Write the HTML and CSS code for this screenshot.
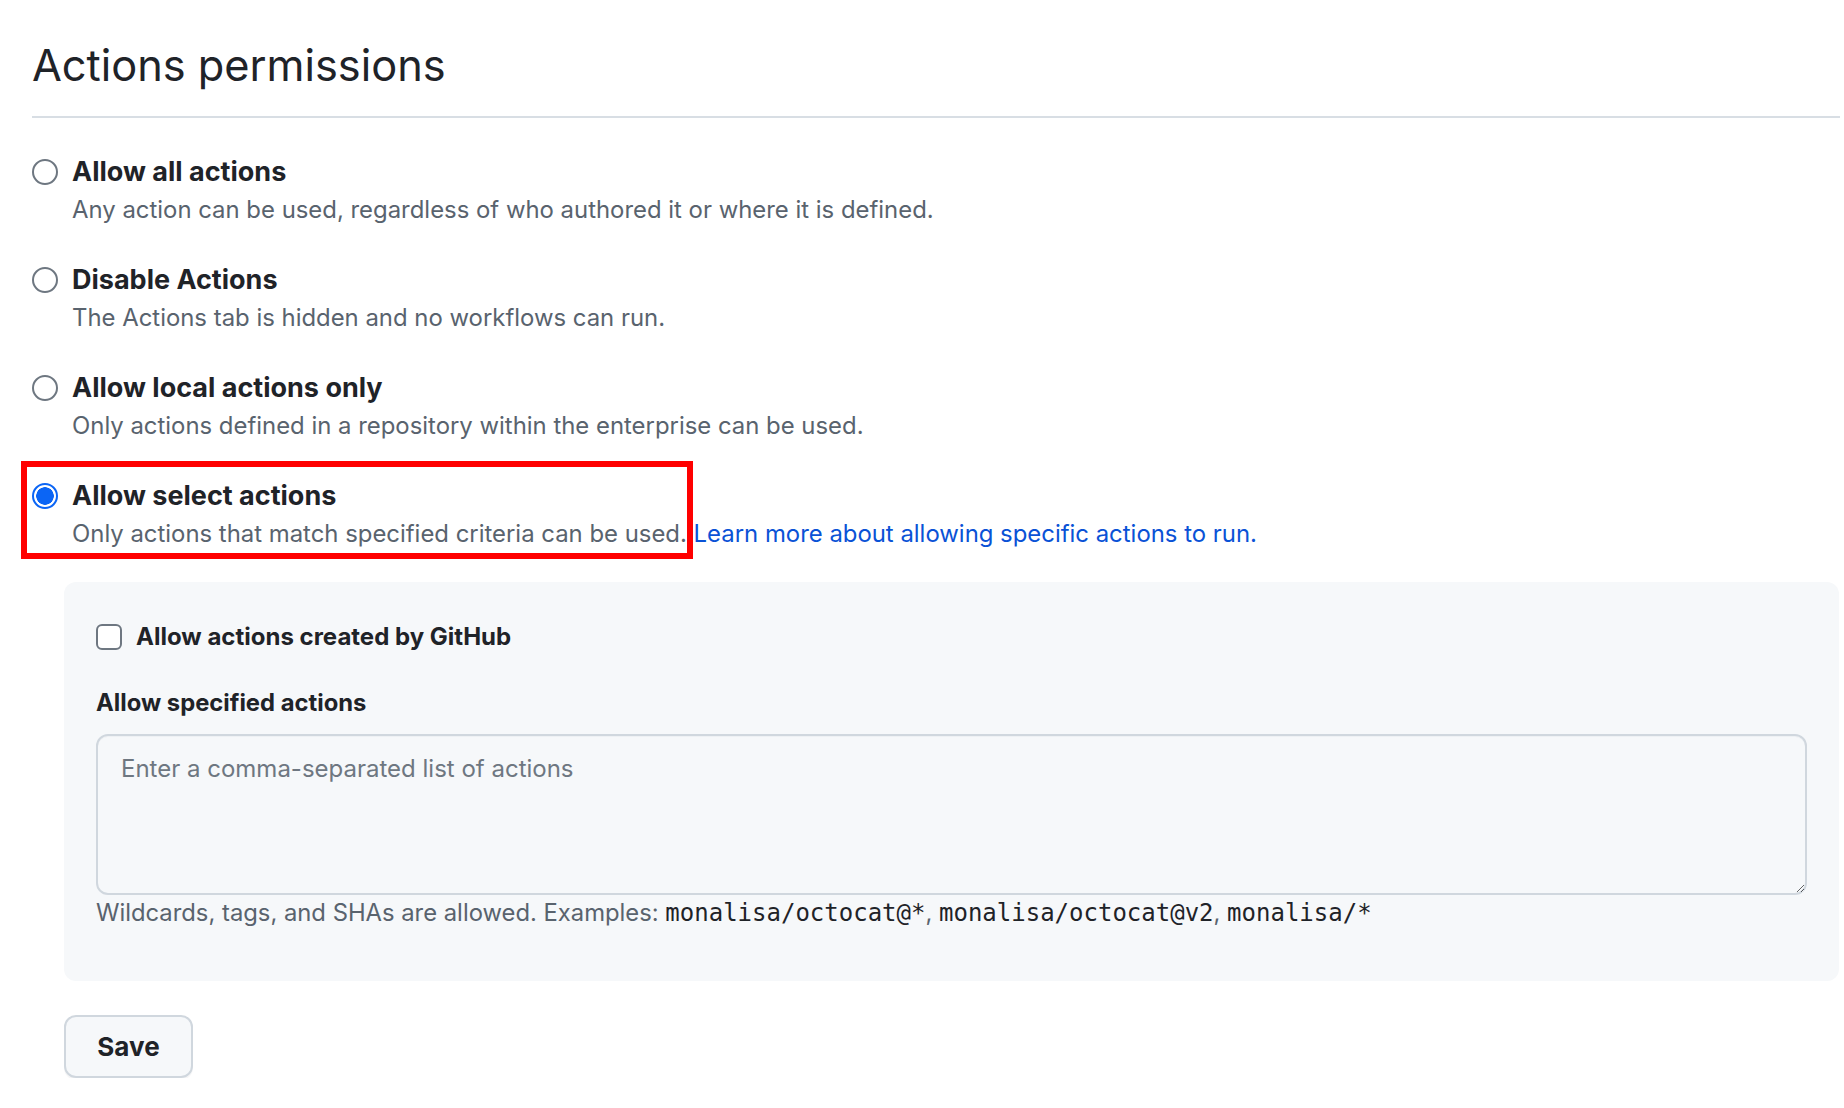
FILE: index.html
```html
<!DOCTYPE html>
<html lang="en">
<head>
<meta charset="utf-8">
<title>Actions permissions</title>
<link rel="stylesheet" href="styles.css">
</head>
<body>
<div class="page">
  <div class="subhead">
    <h2 class="subhead-title">Actions permissions</h2>
  </div>

  <div class="options">
    <div class="option">
      <span class="radio"></span>
      <div class="option-text">
        <div class="option-label">Allow all actions</div>
        <div class="option-desc">Any action can be used, regardless of who authored it or where it is defined.</div>
      </div>
    </div>
    <div class="option">
      <span class="radio"></span>
      <div class="option-text">
        <div class="option-label">Disable Actions</div>
        <div class="option-desc">The Actions tab is hidden and no workflows can run.</div>
      </div>
    </div>
    <div class="option">
      <span class="radio"></span>
      <div class="option-text">
        <div class="option-label">Allow local actions only</div>
        <div class="option-desc">Only actions defined in a repository within the enterprise can be used.</div>
      </div>
    </div>
    <div class="option option-selected">
      <span class="radio radio-checked"></span>
      <div class="option-text">
        <div class="option-label">Allow select actions</div>
        <div class="option-desc">Only actions that match specified criteria can be used. <a class="link" href="#">Learn more about allowing specific actions to run.</a></div>
      </div>
      <span class="annotation"></span>
    </div>
  </div>

  <div class="panel">
    <div class="checkbox-row">
      <span class="checkbox"></span>
      <span class="checkbox-label">Allow actions created by GitHub</span>
    </div>
    <div class="field-label">Allow specified actions</div>
    <textarea class="field-input" placeholder="Enter a comma-separated list of actions"></textarea>
    <div class="field-note">Wildcards, tags, and SHAs are allowed. Examples: <code class="mono">monalisa/octocat@*</code>, <code class="mono">monalisa/octocat@v2</code>, <code class="mono">monalisa/*</code></div>
  </div>

  <button class="btn" type="button">Save</button>
</div>
</body>
</html>
```

FILE: styles.css
```css
* { box-sizing: border-box; }

html, body {
  margin: 0;
  background: #ffffff;
}

body {
  font-family: Inter, "Noto Sans", "Liberation Sans", sans-serif;
  color: #1f2328;
}

.page {
  padding: 0 4px 0 32px;
}

.subhead {
  padding-top: 35px;
  padding-bottom: 21px;
  border-bottom: 2px solid #d8dee4;
}

.subhead-title {
  margin: 0;
  font-size: 43.3px;
  line-height: 60px;
  font-weight: 400;
  color: #1f2328;
}

.options {
  display: flex;
  flex-direction: column;
  gap: 33px;
  padding-top: 35px;
}

.option {
  position: relative;
  display: flex;
  align-items: flex-start;
  gap: 14px;
}

.radio {
  flex: none;
  width: 26px;
  height: 26px;
  margin-top: 6px;
  border-radius: 50%;
  border: 2px solid #6e7781;
  background: #ffffff;
}

.radio-checked {
  border-color: #0b65f5;
  background: radial-gradient(circle, #0b65f5 0 8.5px, #ffffff 9px);
}

.option-label {
  font-size: 27px;
  line-height: 38px;
  font-weight: 700;
  color: #1f2328;
}

.option-desc {
  font-size: 23.9px;
  line-height: 37px;
  color: #59636e;
}

.link {
  color: #0a52d6;
  text-decoration: none;
}

.annotation {
  position: absolute;
  left: -11px;
  top: -16px;
  width: 672px;
  height: 98px;
  border: 6px solid #ff0000;
  pointer-events: none;
}

.panel {
  margin: 30px 1px 0 32px;
  padding: 42px 32px 51px 32px;
  background: #f6f8fa;
  border-radius: 12px;
}

.checkbox-row {
  display: flex;
  align-items: center;
  gap: 14px;
  height: 26px;
}

.checkbox {
  flex: none;
  width: 26px;
  height: 26px;
  border: 2px solid #6e7781;
  border-radius: 6px;
  background: #ffffff;
}

.checkbox-label {
  font-size: 24px;
  line-height: 34px;
  font-weight: 700;
}

.field-label {
  margin-top: 36px;
  font-size: 23.8px;
  line-height: 34px;
  font-weight: 700;
}

.field-input {
  display: block;
  width: 100%;
  height: 161px;
  margin-top: 14px;
  padding: 16px 23px;
  border: 2px solid #d0d7de;
  border-radius: 12px;
  background: #f6f8fa;
  box-shadow: inset 0 1px 0 rgba(208, 215, 222, 0.2);
  font-family: Inter, "Noto Sans", "Liberation Sans", sans-serif;
  font-size: 24px;
  line-height: 34px;
  color: #1f2328;
  resize: vertical;
  outline: none;
}

.field-input::placeholder {
  color: #6e7781;
}

.field-note {
  margin-top: 1px;
  font-size: 23.8px;
  line-height: 34px;
  color: #59636e;
}

.mono {
  font-family: "DejaVu Sans Mono", "Liberation Mono", monospace;
  font-size: 24px;
  color: #1f2328;
}

.btn {
  display: block;
  margin: 34px 0 0 32px;
  width: 129px;
  height: 63px;
  padding: 0;
  border: 2px solid #d0d7de;
  border-radius: 12px;
  background: #f6f8fa;
  box-shadow: 0 2px 0 rgba(31, 35, 40, 0.04);
  font-family: Inter, "Noto Sans", "Liberation Sans", sans-serif;
  font-size: 26px;
  font-weight: 700;
  color: #1f2328;
}
```
